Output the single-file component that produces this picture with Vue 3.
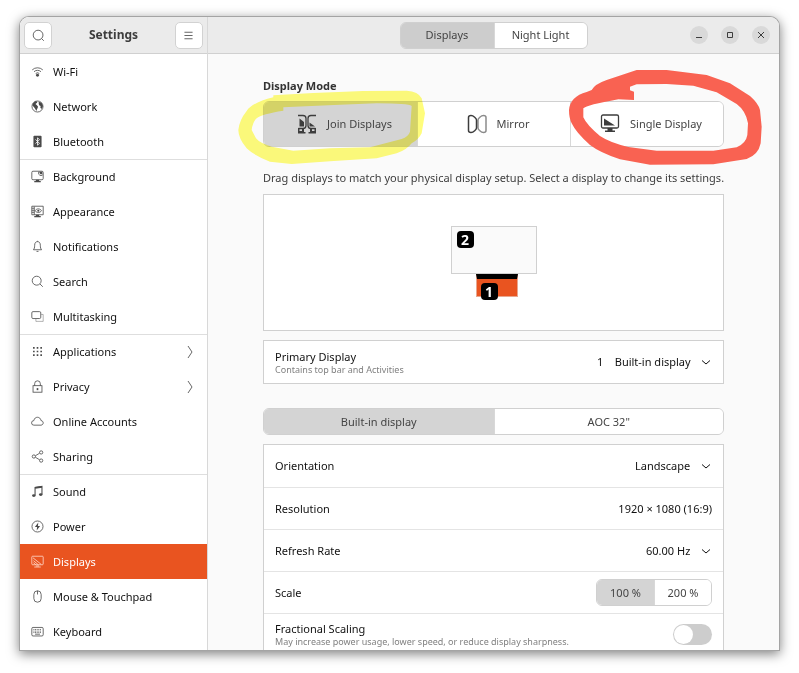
<script setup>
import { ref } from 'vue'

const groups = [
  [
    { label: 'Wi-Fi', icon: '<path d="M1.5 6a9.5 9.5 0 0 1 13 0M3.7 8.3a6.2 6.2 0 0 1 8.6 0M5.8 10.5a3.2 3.2 0 0 1 4.4 0"/><circle cx="8" cy="12.6" r="1.8" fill="currentColor" stroke="none"/>' },
    { label: 'Network', icon: '<circle cx="8" cy="8" r="6.8"/><path fill="currentColor" stroke="none" d="M2 4.500L5 1.500l3 .3-.6 1.700L5.500 5l1.800 1.500 1.400 1.800-.7 2-1.500 3.200-1.200-2.500L3.500 8.500 2 7zM9.500 2l3.500 1.500 1.800 4-1.600 3.500-1.700-1.500.3-2L10 6.500l-.5-2z"/>' },
    { label: 'Bluetooth', icon: '<rect x="3" y="1" width="10" height="14" rx="1" fill="currentColor" stroke="none"/><path stroke="#fff" d="M5.500 5.500l5 4.800L8 12.500v-9l2.500 2.200-5 4.800"/>' },
  ],
  [
    { label: 'Background', icon: '<rect x="1" y="1.500" width="14" height="10.500" rx="1.500"/><path fill="currentColor" stroke="none" d="M9 2h5v5h-3L9 5zM6 12h4v1.500h2V15H4v-1.500h2z"/><path stroke="#fff" d="M10.500 3v2.500h3"/>' },
    { label: 'Appearance', icon: '<path d="M1 1.500h14v10.500H1zM4 2v10M1 4h3M1 6.500h3M1 9h3M5 7c2-3 6-3 8 0-2 3-6 3-8 0z"/><circle cx="9" cy="7" r="1.300" fill="currentColor" stroke="none"/><path fill="currentColor" stroke="none" d="M6 12h4v1.500h2V15H4v-1.500h2z"/>' },
    { label: 'Notifications', icon: '<path d="M3 12c1-1.200 1.500-2.500 1.500-5.500C4.500 3.500 6 2 8 2s3.500 1.500 3.500 4.500c0 3 .5 4.300 1.500 5.500zM6.800 14h2.400M8 1v1"/>' },
    { label: 'Search', icon: '<circle cx="7" cy="7" r="5.500"/><path d="M11 11l3.500 3.500"/>' },
    { label: 'Multitasking', icon: '<path opacity=".5" d="M12.500 5.500H15V14H6v-3"/><rect x="1" y="2" width="11" height="8.500" rx="1.500"/>' },
  ],
  [
    { label: 'Applications', more: true, icon: '<path stroke-width="2" stroke-dasharray="2 2.500" d="M2.500 3.500h11M2.500 8h11M2.500 12.500h11"/>' },
    { label: 'Privacy', more: true, icon: '<rect x="2.500" y="7" width="11" height="8"/><path d="M4.500 7V4.500a3.500 3.500 0 0 1 7 0V7"/><path stroke-width="2" d="M8 10v2.500"/>' },
    { label: 'Online Accounts', icon: '<path d="M3.500 12.500a2.800 2.800 0 0 1 0-5.600C4 4 6 2.800 8 2.800s4 1.400 4.300 4.100c3.600.2 3.600 5.400 0 5.600z"/>' },
    { label: 'Sharing', icon: '<circle cx="3.500" cy="8" r="2"/><circle cx="12.500" cy="3" r="2"/><circle cx="12.500" cy="13" r="2"/><path d="M5.500 7l5-3M5.500 9l5 3"/>' },
  ],
  [
    { label: 'Sound', icon: '<path stroke-width="1.300" d="M5 12.500V3l8.500-1.200v9.500"/><path stroke-width="2.200" d="M5 3.500l8.500-1.200"/><ellipse cx="3.500" cy="13" rx="2.200" ry="1.700" fill="currentColor" stroke="none"/><ellipse cx="12" cy="11.800" rx="2.200" ry="1.700" fill="currentColor" stroke="none"/>' },
    { label: 'Power', icon: '<circle cx="8" cy="8" r="6.800"/><path fill="currentColor" stroke="none" d="M9 3L4.800 8.500h2.700L7 13l4.200-5.500H8.500z"/>' },
    { label: 'Displays', active: true, icon: '<rect x="1" y="1.500" width="14" height="10.500" rx="1"/><path d="M2.500 3.500l10 8M3 7l6 5M3 9.500L6 12M6 13.500h4M4 14.800h8"/>' },
    { label: 'Mouse & Touchpad', icon: '<rect x="3.500" y="1" width="9" height="14" rx="4.500"/><path d="M8 1v4.500"/>' },
    { label: 'Keyboard', icon: '<rect x="1" y="3" width="14" height="10.500" rx="1.500"/><path stroke-dasharray="1.200 .8" d="M3 5.500h10M3 7.500h10M3 9.300h10"/><path d="M5 11.300h6"/>' },
  ],
]

const modes = [
  { label: 'Join Displays', icon: '<path stroke-width="1.300" d="M1 1.500h5c2 0 3 1.300 3 3v7c0 2-1 3-3 3H1.500M19 1.500h-5c-2 0-3 1.300-3 3v7c0 2 1 3 3 3h4.500"/><path fill="currentColor" stroke="none" d="M2.500 4.500L7 8v4.500H2.500zM12.500 8.500l5.500 4h-5.500zM1 14h1.500v3H5V15h2v3h1.500v1.500H1zM19 14h-1.500v3H15V15h-2v3h-1.500v1.500H19z"/>' },
  { label: 'Mirror', icon: '<path stroke-width="1.500" d="M1.500 3.500C1.500 2 2.500 1.500 4 1.500c2.500 0 5.500 3 5.500 4.500v8c0 1.500-3 4.500-5.500 4.500-1.500 0-2.500-.5-2.500-2z"/><path stroke-width="1.500" opacity=".6" d="M19 3.500c0-1.500-1-2-2.500-2-2.500 0-5.500 3-5.500 4.500v8c0 1.500 3 4.500 5.500 4.500 1.500 0 2.500-.5 2.500-2z"/>' },
  { label: 'Single Display', icon: '<rect x="1.500" y="1" width="17" height="13" rx="1.500" stroke-width="1.300"/><path fill="currentColor" stroke="none" d="M4 4.500l11 7H4zM7.500 14h5v2.500H15V18H5v-1.500h2.500z"/>' },
]

const mode = ref('Join Displays')
const output = ref('Built-in display')
const scale = ref('100 %')
const fractional = ref(false)
</script>

<template>
  <div class="desktop">
    <div class="window">
      <aside class="side">
        <header class="bar side-bar">
          <button class="square" aria-label="Search">
            <svg viewBox="0 0 16 16"><circle cx="7.500" cy="7.500" r="6" /><path d="M12 12L14.500 14.500" /></svg>
          </button>
          <h1>Settings</h1>
          <button class="square" aria-label="Menu">
            <svg viewBox="0 0 16 16"><path d="M3 4h10M3 8h10M3 12h10" /></svg>
          </button>
        </header>
        <nav>
          <div v-for="(group, i) in groups" :key="i" class="group">
            <a v-for="item in group" :key="item.label" href="#" class="item" :class="{ active: item.active }">
              <svg class="icon" viewBox="0 0 16 16" aria-hidden="true" v-html="item.icon"></svg>
              <span>{{ item.label }}</span>
              <svg v-if="item.more" class="more" viewBox="0 0 8 14" aria-hidden="true"><path d="M2 1l4 6-4 6" /></svg>
            </a>
          </div>
        </nav>
      </aside>

      <main class="main">
        <header class="bar main-bar">
          <div class="linked top-tabs">
            <button class="on">Displays</button>
            <button>Night Light</button>
          </div>
          <div class="controls">
            <button aria-label="Minimize"><svg viewBox="0 0 18 18"><path d="M6 11.500h6" /></svg></button>
            <button aria-label="Maximize"><svg viewBox="0 0 18 18"><path d="M6.500 6.500h5v5h-5z" /></svg></button>
            <button aria-label="Close"><svg viewBox="0 0 18 18"><path d="M6 6l6 6M12 6l-6 6" /></svg></button>
          </div>
        </header>

        <div class="content">
          <h2>Display Mode</h2>
          <div class="modes">
            <div class="linked mode-tabs">
              <button v-for="m in modes" :key="m.label" :class="{ on: mode === m.label }" @click="mode = m.label">
                <svg viewBox="0 0 20 20" aria-hidden="true" v-html="m.icon"></svg>
                <span>{{ m.label }}</span>
              </button>
            </div>
            <svg class="marker yellow" viewBox="0 0 840 390" aria-hidden="true">
              <path fill-rule="evenodd" d="M130 76L250 69L400 63L530 62Q565 64 575 85L585 130L575 190Q565 210 545 220Q530 240 500 250L440 265L300 274L185 282L120 275Q70 255 50 235Q25 205 25 180Q28 150 50 123Q65 98 130 82ZM160 112L330 104L440 100Q535 100 545 108L540 185Q535 200 515 207L420 232L300 235L190 242L125 230Q90 220 78 205L65 180Q68 155 80 145Q95 132 160 122Z" />
            </svg>
            <svg class="marker red" viewBox="0 0 900 420" aria-hidden="true">
              <path fill-rule="evenodd" d="M275 90Q285 72 320 60L410 30L500 30L620 45L690 70L750 108Q775 130 780 150L785 200L782 250Q775 285 740 297L640 313L450 314L360 298Q300 278 270 255Q228 218 215 190Q207 175 207 150Q210 110 260 96ZM250 145Q260 135 355 118L402 120L402 95L390 91L390 80L410 73L500 72L580 77L650 97L710 132Q738 153 744 190L742 225Q738 250 710 262L640 272L470 272L385 261Q330 248 300 228Q260 195 250 172Z" />
            </svg>
          </div>
          <p class="hint">Drag displays to match your physical display setup. Select a display to change its settings.</p>

          <div class="canvas">
            <div class="stage">
              <div class="screen external"><b>2</b></div>
              <div class="screen builtin"><b>1</b></div>
            </div>
          </div>

          <div class="card">
            <div class="row">
              <label for="primary">Primary Display<small>Contains top bar and Activities</small></label>
              <div class="picker">
                <select id="primary"><option>1 &nbsp;&nbsp; Built-in display</option></select>
                <svg viewBox="0 0 10 10" aria-hidden="true"><path d="M1 3.500l4 3.500 4-3.500" /></svg>
              </div>
            </div>
          </div>

          <div class="linked output-tabs">
            <button v-for="o in ['Built-in display', 'AOC 32&quot;']" :key="o" :class="{ on: output === o }" @click="output = o">{{ o }}</button>
          </div>

          <div class="card">
            <div class="row">
              <label for="orientation">Orientation</label>
              <div class="picker">
                <select id="orientation"><option>Landscape</option></select>
                <svg viewBox="0 0 10 10" aria-hidden="true"><path d="M1 3.500l4 3.500 4-3.500" /></svg>
              </div>
            </div>
            <div class="row"><span>Resolution</span><span>1920 × 1080 (16:9)</span></div>
            <div class="row">
              <label for="rate">Refresh Rate</label>
              <div class="picker">
                <select id="rate"><option>60.00 Hz</option></select>
                <svg viewBox="0 0 10 10" aria-hidden="true"><path d="M1 3.500l4 3.500 4-3.500" /></svg>
              </div>
            </div>
            <div class="row">
              <span>Scale</span>
              <div class="linked scale-tabs">
                <button v-for="s in ['100 %', '200 %']" :key="s" :class="{ on: scale === s }" @click="scale = s">{{ s }}</button>
              </div>
            </div>
            <div class="row">
              <label for="fractional">Fractional Scaling<small>May increase power usage, lower speed, or reduce display sharpness.</small></label>
              <input id="fractional" v-model="fractional" class="switch" type="checkbox" role="switch" />
            </div>
          </div>
        </div>
      </main>
    </div>
  </div>
</template>

<style>
body {
  background: #fff;
}
</style>

<style scoped>
* {
  box-sizing: border-box;
}
.desktop {
  height: 100vh;
  padding: 17px 20px 23px;
  font: 11px/16px "Noto Sans", sans-serif;
  color: #111;
}
.window {
  display: grid;
  grid-template-columns: 188px 1fr;
  height: 100%;
  overflow: hidden;
  border-radius: 9px 9px 0 0;
  background: #fafafa;
  box-shadow: 0 0 0 1px #a4a4a4, 0 3px 12px 1px rgba(0, 0, 0, 0.5);
}
button,
select {
  font: inherit;
  color: inherit;
}
button {
  padding: 0;
  border: 0;
  cursor: pointer;
}
svg {
  fill: none;
  stroke: currentColor;
}
h1,
h2,
p {
  margin: 0;
}
.bar {
  display: flex;
  align-items: center;
  height: 37px;
  background: #ebebeb;
  border-bottom: 1px solid #d0d0d0;
}
.side {
  background: #fff;
  border-right: 1px solid #d8d8d8;
  overflow: hidden;
}
.side-bar {
  justify-content: space-between;
  padding: 0 4px;
}
h1 {
  font-size: 12px;
  color: #3d3d3d;
}
.square {
  display: grid;
  place-items: center;
  width: 28px;
  height: 27px;
  border: 1px solid #d2d2d2;
  border-radius: 5px;
  background: #fff;
  color: #444;
}
.square svg {
  width: 13px;
  height: 13px;
}
.group + .group {
  box-shadow: inset 0 1px #dedede;
}
.item {
  display: flex;
  align-items: center;
  gap: 9px;
  height: 35px;
  padding: 0 13px 0 11px;
  color: inherit;
  text-decoration: none;
}
.item.active {
  background: #e95420;
  color: #fff;
}
.icon {
  width: 13px;
  height: 13px;
  color: #4a4a4a;
}
.active .icon {
  color: #ffd9cb;
}
.more {
  width: 8px;
  height: 14px;
  margin-left: auto;
  color: #666;
}
.main {
  min-width: 0;
  overflow: hidden;
}
.main-bar {
  display: grid;
  grid-template-columns: 1fr 188px 1fr;
  padding: 0 9px;
}
.linked {
  display: grid;
  grid-auto-flow: column;
  grid-auto-columns: 1fr;
  overflow: hidden;
  border: 1px solid #d0d0d0;
  border-radius: 6px;
  color: #444;
}
.linked button {
  background: #fff;
}
.linked button + button {
  border-left: 1px solid #d8d8d8;
}
.linked .on {
  background: #d4d4d4;
}
.top-tabs {
  grid-column: 2;
  height: 27px;
}
.top-tabs .on {
  background: #cdcdcd;
}
.controls {
  display: flex;
  justify-content: flex-end;
  gap: 13px;
}
.controls button {
  width: 18px;
  height: 18px;
  border-radius: 50%;
  background: #d9d9d9;
  color: #3d3d3d;
}
.controls svg {
  display: block;
}
.content {
  padding: 24px 55px 0;
}
h2 {
  font-size: 11px;
  line-height: 16px;
  color: #333;
}
.modes {
  position: relative;
  margin-top: 7px;
}
.mode-tabs {
  height: 46px;
}
.mode-tabs button {
  display: flex;
  align-items: center;
  justify-content: center;
  gap: 10px;
  padding-left: 8px;
}
.mode-tabs svg {
  width: 20px;
  height: 20px;
  color: #3d3d3d;
}
.marker {
  position: absolute;
  pointer-events: none;
  stroke: none;
}
.yellow {
  left: -33px;
  top: -31px;
  width: 280px;
  height: 130px;
  fill: #fffd7c;
  mix-blend-mode: multiply;
}
.red {
  right: -76px;
  top: -41px;
  width: 300px;
  height: 140px;
  fill: #f96252;
}
.hint {
  margin-top: 23px;
  color: #3d3d3d;
  white-space: nowrap;
}
.canvas {
  display: grid;
  place-items: center;
  height: 137px;
  margin-top: 8px;
  border: 1px solid #d0d0d0;
  background: #fff;
}
.stage {
  position: relative;
  width: 86px;
  height: 73px;
}
.screen {
  position: absolute;
}
.external {
  left: 0;
  top: 0;
  width: 86px;
  height: 48px;
  border: 1px solid #d0d0d0;
  background: #fafafa;
}
.builtin {
  left: 25px;
  top: 48px;
  width: 42px;
  height: 23px;
  border: 1px solid #e8a78f;
  border-top: 5px solid #000;
  background: #e95420;
}
.screen b {
  position: absolute;
  left: 5px;
  top: 4px;
  width: 17px;
  height: 17px;
  border-radius: 4px;
  background: #000;
  color: #fff;
  font-size: 14px;
  line-height: 17px;
  text-align: center;
}
.builtin b {
  left: 4px;
}
.card {
  margin-top: 9px;
  border: 1px solid #d0d0d0;
  background: #fff;
}
.row {
  display: flex;
  align-items: center;
  justify-content: space-between;
  height: 42px;
  padding: 0 11px;
}
.row + .row {
  border-top: 1px solid #e4e4e4;
}
small {
  display: block;
  font-size: 9px;
  line-height: 12px;
  color: #808080;
}
.row label:has(small) {
  line-height: 15px;
}
.picker {
  display: grid;
  align-items: center;
}
.picker select,
.picker svg {
  grid-area: 1 / 1;
}
.picker select {
  appearance: none;
  padding: 0 21px 0 0;
  border: 0;
  background: transparent;
}
.picker svg {
  justify-self: end;
  width: 10px;
  height: 10px;
  margin-right: 1px;
  pointer-events: none;
}
.output-tabs {
  height: 27px;
  margin-top: 24px;
}
.scale-tabs {
  width: 116px;
  height: 27px;
}
.switch {
  appearance: none;
  display: flex;
  width: 39px;
  height: 21px;
  margin: 0;
  padding: 1px;
  border-radius: 11px;
  background: #cdcdcd;
}
.switch::before {
  content: "";
  width: 19px;
  height: 19px;
  border-radius: 50%;
  background: #fff;
}
.switch:checked {
  justify-content: flex-end;
  background: #e95420;
}
</style>
